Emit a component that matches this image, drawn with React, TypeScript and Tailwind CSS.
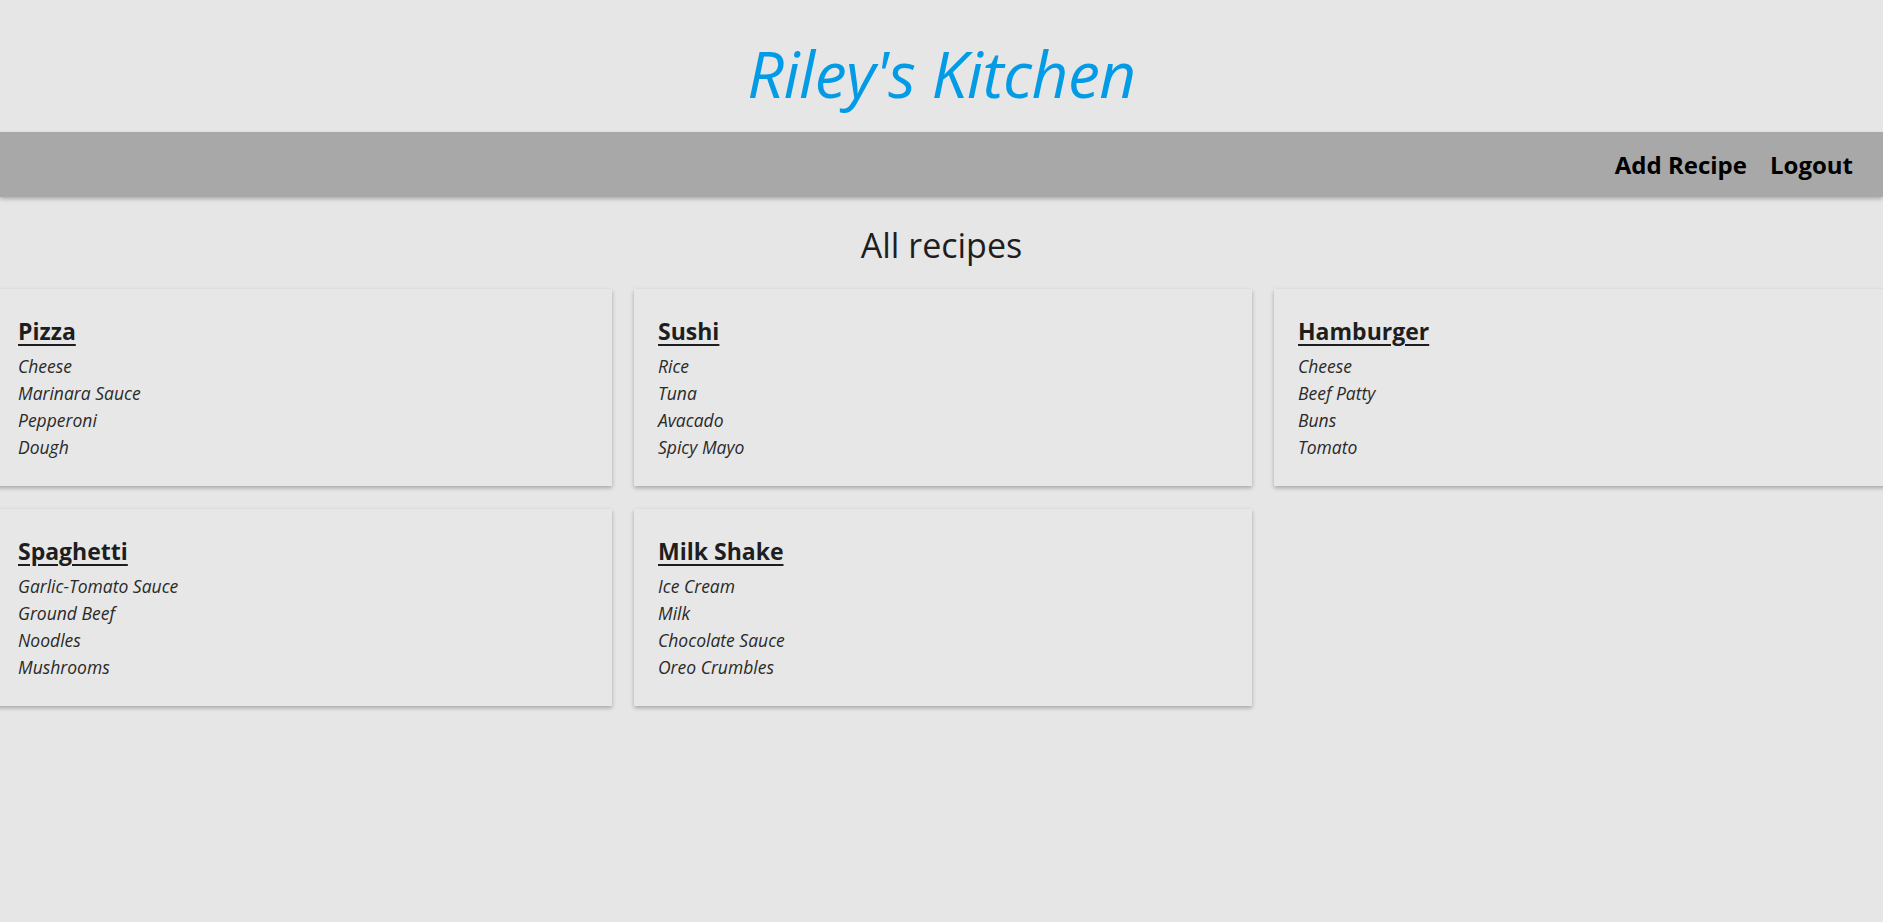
const recipes = [
  { name: "Pizza", items: ["Cheese", "Marinara Sauce", "Pepperoni", "Dough"] },
  { name: "Sushi", items: ["Rice", "Tuna", "Avacado", "Spicy Mayo"] },
  { name: "Hamburger", items: ["Cheese", "Beef Patty", "Buns", "Tomato"] },
  { name: "Spaghetti", items: ["Garlic-Tomato Sauce", "Ground Beef", "Noodles", "Mushrooms"] },
  { name: "Milk Shake", items: ["Ice Cream", "Milk", "Chocolate Sauce", "Oreo Crumbles"] },
];

function RecipeCard({ name, items }: { name: string; items: string[] }) {
  return (
    <div className="bg-[#e7e7e7] shadow-[0_2px_4px_rgba(0,0,0,0.28)] pt-[26px] pb-[25px] px-[24px]">
      <h2 className="text-[23px] leading-[32px] font-bold underline underline-offset-[4px] decoration-2 text-[#1e1e1e]">
        {name}
      </h2>
      <ul className="mt-[6px]">
        {items.map((item) => (
          <li key={item} className="text-[17.5px] leading-[27px] italic text-[#2a2a2a]">
            {item}
          </li>
        ))}
      </ul>
    </div>
  );
}

export default function App() {
  return (
    <div
      className="min-h-[922px] bg-[#e6e6e6] overflow-hidden"
      style={{ fontFamily: "'Open Sans', 'Noto Sans', sans-serif" }}
    >
      <header className="h-[132px] flex items-center justify-center">
        <h1 className="text-[64px] italic text-[#039be5] tracking-[-0.5px] mt-[16px]">Riley's Kitchen</h1>
      </header>
      <nav className="h-[65px] bg-[#a8a8a8] shadow-[0_2px_4px_rgba(0,0,0,0.25)] flex items-center justify-end gap-[23px] pr-[30px]">
        <a href="#" className="text-[24px] font-bold text-black">Add Recipe</a>
        <a href="#" className="text-[24px] font-bold text-black">Logout</a>
      </nav>
      <h2 className="text-center text-[34px] text-[#1e1e1e] mt-[25px] leading-[46px]">All recipes</h2>
      <div className="w-[1898px] ml-[-6px] mt-[21px] grid grid-cols-3 gap-x-[22px] gap-y-[23px]">
        {recipes.map((r) => (
          <RecipeCard key={r.name} name={r.name} items={r.items} />
        ))}
      </div>
    </div>
  );
}
